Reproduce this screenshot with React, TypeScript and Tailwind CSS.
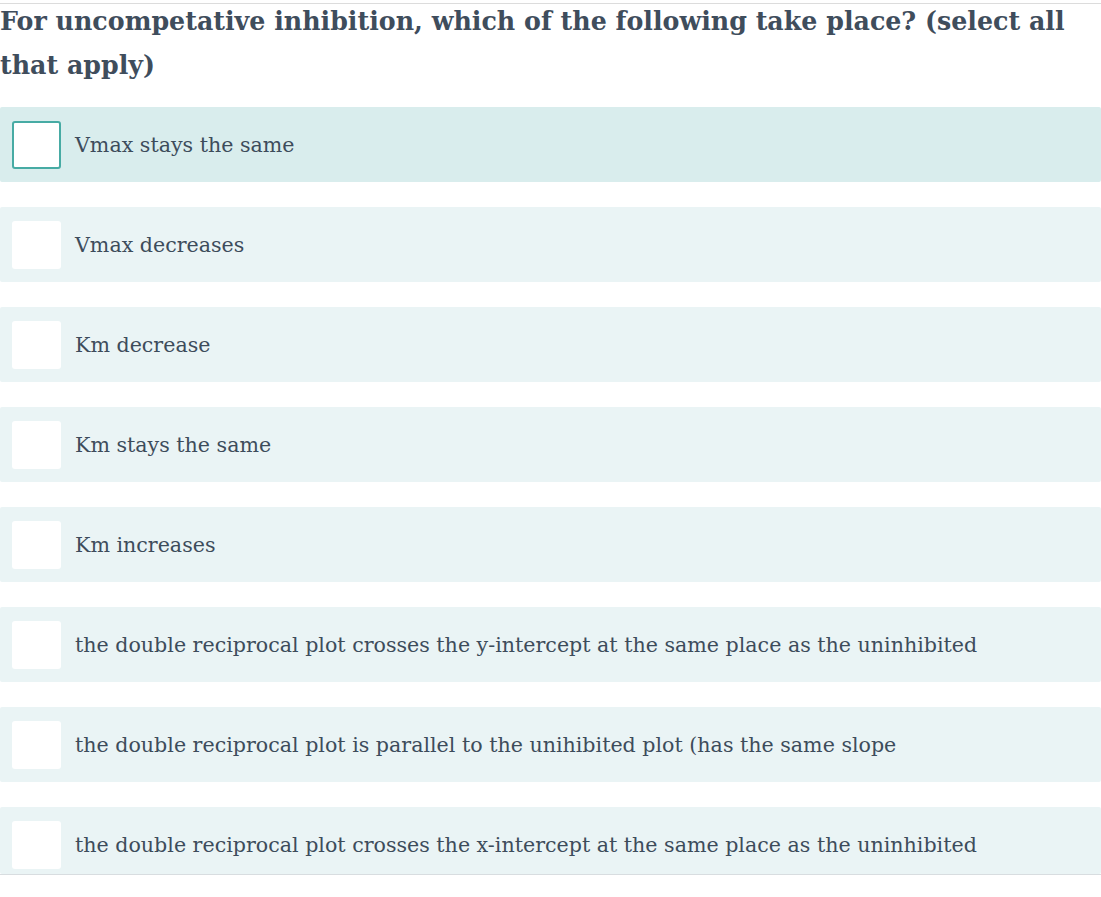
import React from 'react';

const options = [
  'Vmax stays the same',
  'Vmax decreases',
  'Km decrease',
  'Km stays the same',
  'Km increases',
  'the double reciprocal plot crosses the y-intercept at the same place as the uninhibited',
  'the double reciprocal plot is parallel to the unihibited plot (has the same slope',
  'the double reciprocal plot crosses the x-intercept at the same place as the uninhibited',
];

export default function App() {
  return (
    <div
      className="w-[1101px] h-[897px] bg-white overflow-hidden text-[#3d4c5b]"
      style={{ fontFamily: '"DejaVu Serif", serif' }}
    >
      <div className="mt-[3px] border-t border-[#dcdcdc]">
        {/* Question */}
        <h1 className="-mt-[5px] text-[25.3px] leading-[44px] font-bold text-[#3f4d5c]">
          For uncompetative inhibition, which of the following take place? (select all that apply)
        </h1>

        {/* Answers */}
        <div className="mt-[20px] flex flex-col gap-[25px] border-b border-[#d8dde0]">
          {options.map((opt, i) => {
            const active = i === 0;
            const last = i === options.length - 1;
            return (
              <label
                key={opt}
                className={`flex items-start gap-[14px] pl-[12px] pt-[14px] ${last ? 'h-[67px]' : 'h-[75px]'} rounded-[2px] ${
                  active ? 'bg-[#d9eded]' : 'bg-[#eaf4f5]'
                }`}
              >
                <span
                  className={`w-[49px] h-[48px] shrink-0 rounded-[3px] bg-white ${
                    active ? 'border-2 border-[#47aba4]' : ''
                  }`}
                />
                <span className="text-[20.6px] leading-[48px]">{opt}</span>
              </label>
            );
          })}
        </div>
      </div>
    </div>
  );
}
